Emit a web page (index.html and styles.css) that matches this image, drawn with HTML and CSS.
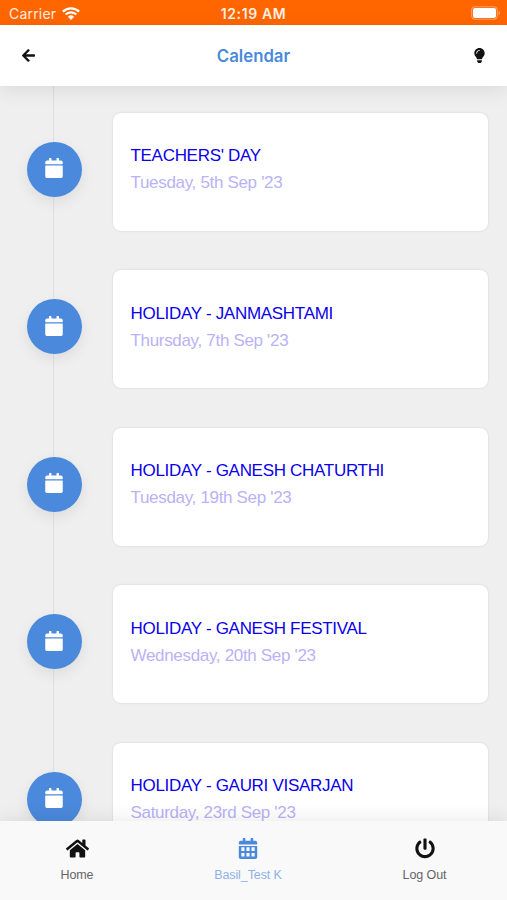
FILE: index.html
```html
<!DOCTYPE html>
<html lang="en">
<head>
    <meta charset="UTF-8">
    <meta name="viewport" content="width=device-width, initial-scale=1.0">
    <title>Calendar</title>
    <link rel="stylesheet" href="styles.css">
</head>
<body>
    <svg class="sprite">
        <symbol id="icon-calendar" viewBox="0 0 448 512">
            <path d="M12 192h424c6.600 0 12 5.400 12 12v260c0 26.500-21.500 48-48 48H48c-26.500 0-48-21.500-48-48V204c0-6.600 5.400-12 12-12zm436-44v-36c0-26.500-21.500-48-48-48h-48V12c0-6.600-5.400-12-12-12h-40c-6.600 0-12 5.400-12 12v52H160V12c0-6.600-5.400-12-12-12h-40c-6.600 0-12 5.400-12 12v52H48C21.500 64 0 85.500 0 112v36c0 6.600 5.400 12 12 12h424c6.600 0 12-5.400 12-12z"/>
        </symbol>
    </svg>

    <div class="app">
        <div class="status-bar">
            <div class="status-left">
                <span class="carrier">Carrier</span>
                <svg class="wifi" viewBox="0 0 18 13">
                    <path d="M0.900 4.600a11.700 11.700 0 0 1 16.200 0M3.600 7.500a7.700 7.700 0 0 1 10.800 0" fill="none" stroke="currentColor" stroke-width="2.300"/>
                    <path d="M5.900 9.700a4.600 4.600 0 0 1 6.200 0L9 13z" fill="currentColor"/>
                </svg>
            </div>
            <span class="time">12:19 AM</span>
            <svg class="battery" viewBox="0 0 30 14">
                <rect x="0.700" y="0.700" width="25.600" height="12.600" rx="3.600" fill="none" stroke="#ffa366" stroke-width="1.100"/>
                <rect x="2" y="2" width="23" height="10" rx="2" fill="#fff"/>
                <path d="M27.600 4.800c1.900.6 1.900 3.800 0 4.400z" fill="#ffa366"/>
            </svg>
        </div>

        <header class="header">
            <svg class="back" viewBox="0 0 448 512">
                <path d="M257.500 445.100l-22.200 22.200c-9.400 9.400-24.600 9.400-33.900 0L7 273c-9.400-9.400-9.400-24.600 0-33.900L201.400 44.700c9.400-9.400 24.600-9.400 33.900 0l22.200 22.200c9.500 9.500 9.300 25-.4 34.300L136.600 216H424c13.300 0 24 10.700 24 24v32c0 13.300-10.700 24-24 24H136.600l120.500 114.800c9.800 9.300 10 24.800.4 34.300z"/>
            </svg>
            <h1>Calendar</h1>
            <svg class="bulb" viewBox="0 0 352 512">
                <path d="M96.060 454.350c.01 6.290 1.870 12.450 5.360 17.690l17.090 25.690a31.990 31.990 0 0 0 26.640 14.280h61.710a31.990 31.990 0 0 0 26.640-14.280l17.090-25.690a31.990 31.990 0 0 0 5.360-17.690l.04-38.350H96.010l.05 38.350zM0 176c0 44.370 16.450 84.850 43.560 115.780 16.520 18.850 42.360 58.230 52.210 91.450.04.26.07.52.11.780h160.240c.04-.26.07-.51.11-.780 9.850-33.220 35.690-72.600 52.210-91.450C335.550 260.850 352 220.370 352 176 352 78.610 272.910-.3 175.450 0 73.440.31 0 82.970 0 176zm176-80c-44.110 0-80 35.890-80 80 0 8.840-7.160 16-16 16s-16-7.160-16-16c0-61.760 50.240-112 112-112 8.840 0 16 7.160 16 16s-7.160 16-16 16z"/>
            </svg>
        </header>

        <main class="timeline">
            <div class="event">
                <div class="event-icon"><svg><use href="#icon-calendar"/></svg></div>
                <div class="event-card">
                    <h2>TEACHERS' DAY</h2>
                    <p>Tuesday, 5th Sep '23</p>
                </div>
            </div>
            <div class="event">
                <div class="event-icon"><svg><use href="#icon-calendar"/></svg></div>
                <div class="event-card">
                    <h2>HOLIDAY - JANMASHTAMI</h2>
                    <p>Thursday, 7th Sep '23</p>
                </div>
            </div>
            <div class="event">
                <div class="event-icon"><svg><use href="#icon-calendar"/></svg></div>
                <div class="event-card">
                    <h2>HOLIDAY - GANESH CHATURTHI</h2>
                    <p>Tuesday, 19th Sep '23</p>
                </div>
            </div>
            <div class="event">
                <div class="event-icon"><svg><use href="#icon-calendar"/></svg></div>
                <div class="event-card">
                    <h2>HOLIDAY - GANESH FESTIVAL</h2>
                    <p>Wednesday, 20th Sep '23</p>
                </div>
            </div>
            <div class="event">
                <div class="event-icon"><svg><use href="#icon-calendar"/></svg></div>
                <div class="event-card">
                    <h2>HOLIDAY - GAURI VISARJAN</h2>
                    <p>Saturday, 23rd Sep '23</p>
                </div>
            </div>
        </main>

        <nav class="tabs">
            <a class="tab">
                <svg class="home" viewBox="0 0 576 512">
                    <path d="M280.370 148.260L96 300.110V464a16 16 0 0 0 16 16l112.060-.29a16 16 0 0 0 15.920-16V368a16 16 0 0 1 16-16h64a16 16 0 0 1 16 16v95.640a16 16 0 0 0 16 16.050L464 480a16 16 0 0 0 16-16V300L295.670 148.260a12.190 12.190 0 0 0-15.300 0zM571.600 251.470L488 182.560V44.050a12 12 0 0 0-12-12h-56a12 12 0 0 0-12 12v72.610L318.470 43a48 48 0 0 0-61 0L4.340 251.470a12 12 0 0 0-1.600 16.900l25.500 31A12 12 0 0 0 45.150 301l235.220-193.740a12.190 12.190 0 0 1 15.300 0L530.900 301a12 12 0 0 0 16.900-1.600l25.500-31a12 12 0 0 0-1.700-16.930z"/>
                </svg>
                <span>Home</span>
            </a>
            <a class="tab active">
                <svg viewBox="0 0 448 512">
                    <path fill-rule="evenodd" d="M0 192h448v272c0 26.500-21.500 48-48 48H48c-26.500 0-48-21.500-48-48zM62 228v88h76v-88zM186 228v88h76v-88zM310 228v88h76v-88zM62 364v88h76v-88zM186 364v88h76v-88zM310 364v88h76v-88zM448 148v-36c0-26.500-21.500-48-48-48h-48V12c0-6.600-5.400-12-12-12h-40c-6.600 0-12 5.400-12 12v52H160V12c0-6.600-5.400-12-12-12h-40c-6.600 0-12 5.400-12 12v52H48C21.500 64 0 85.500 0 112v36c0 6.600 5.400 12 12 12h424c6.600 0 12-5.400 12-12z"/>
                </svg>
                <span>Basil_Test K</span>
            </a>
            <a class="tab">
                <svg viewBox="0 0 512 512">
                    <path d="M400 54.100c63 45 104 118.600 104 201.900 0 136.800-110.800 247.700-247.500 248C120 504.300 8.200 393 8 256.400 7.900 173.100 48.900 99.300 111.800 54.200c11.700-8.300 28-4.800 35 7.700L162.600 90c5.900 10.500 3.100 23.800-6.600 31-41.500 30.800-68 79.600-68 134.900-.1 92.300 74.500 168.100 168 168.100 91.600 0 168.600-74.200 168-169.100-.3-51.800-24.700-101.800-68.100-134-9.700-7.200-12.400-20.500-6.500-30.900l15.800-28.100c7-12.400 23.200-16.100 34.800-7.800zM296 264V24c0-13.300-10.700-24-24-24h-32c-13.300 0-24 10.700-24 24v240c0 13.300 10.700 24 24 24h32c13.300 0 24-10.700 24-24z"/>
                </svg>
                <span>Log Out</span>
            </a>
        </nav>
    </div>
</body>
</html>
```

FILE: styles.css
```css
* {
    box-sizing: border-box;
}

body, html {
    margin: 0;
    padding: 0;
    height: 100%;
    overflow: hidden;
    font-family: "Liberation Sans", Arial, sans-serif;
    background-color: #efefef;
}

.sprite {
    display: none;
}

.app {
    height: 100vh;
    display: flex;
    flex-direction: column;
}

.status-bar {
    height: 25px;
    flex-shrink: 0;
    display: grid;
    grid-template-columns: 1fr auto 1fr;
    align-items: center;
    padding: 2px 6px 0;
    background-color: #ff6600;
    color: #ffeee2;
    font-family: Inter, sans-serif;
}

.status-left {
    display: flex;
    align-items: center;
    gap: 6px;
    padding-left: 3px;
}

.carrier {
    font-size: 14px;
    letter-spacing: 0.2px;
}

.wifi {
    width: 18px;
    height: 13px;
    color: #fff;
    margin-top: -1px;
}

.time {
    font-size: 14px;
    font-weight: 600;
    letter-spacing: 0.600px;
}

.battery {
    width: 30px;
    height: 14px;
    justify-self: end;
    margin-top: -1px;
}

.header {
    height: 61px;
    flex-shrink: 0;
    display: grid;
    grid-template-columns: 1fr auto 1fr;
    align-items: center;
    padding: 0 22px;
    background-color: #fff;
    box-shadow: 0 4px 20px rgba(0, 0, 0, 0.09);
    z-index: 2;
}

.header h1 {
    margin: 0;
    font-family: Inter, sans-serif;
    font-size: 16.800px;
    font-weight: 600;
    color: #4a89dc;
}

.back {
    width: 13px;
    height: 15px;
    fill: #111;
    margin-top: -1px;
}

.bulb {
    width: 11px;
    height: 15px;
    fill: #111;
    justify-self: end;
    margin-top: -1px;
}

.timeline {
    flex: 1;
    min-height: 0;
    overflow: hidden;
    display: flex;
    flex-direction: column;
    gap: 39.500px;
    padding: 26.500px 19.500px 0 26.500px;
    background: linear-gradient(#dfdfdf, #dfdfdf) 53px 0 / 1px 100% no-repeat #efefef;
}

.event {
    flex-shrink: 0;
    display: flex;
    gap: 31px;
}

.event-icon {
    width: 55px;
    height: 55px;
    margin-top: 29px;
    border-radius: 50%;
    display: flex;
    align-items: center;
    justify-content: center;
    background-color: #4a89dc;
    box-shadow: 0 5px 14px rgba(0, 0, 0, 0.08);
}

.event-icon svg {
    width: 18px;
    height: 20px;
    fill: #fff;
    margin-top: -2px;
}

.event-card {
    flex: 1;
    height: 118px;
    padding: 29.500px 18px;
    border-radius: 8px;
    background-color: #fff;
    box-shadow: 0 0 2px rgba(0, 0, 0, 0.15);
    white-space: nowrap;
}

.event-card h2 {
    margin: 0;
    font-size: 17px;
    line-height: 27px;
    font-weight: normal;
    letter-spacing: -0.300px;
    color: #0a00ea;
}

.event-card p {
    margin: 0;
    font-size: 17px;
    line-height: 27px;
    letter-spacing: -0.320px;
    color: #b9b2f7;
}

.tabs {
    height: 79px;
    flex-shrink: 0;
    display: flex;
    justify-content: space-between;
    padding: 17px 0 0;
    background-color: #f9f9f9;
    box-shadow: 0 -3px 16px rgba(0, 0, 0, 0.08);
    z-index: 2;
}

.tab {
    width: 154px;
    display: flex;
    flex-direction: column;
    align-items: center;
    gap: 8px;
    font-size: 12.500px;
    line-height: 16px;
    letter-spacing: -0.100px;
    color: #666;
}

.tab:last-child {
    width: 165px;
}

.tab svg {
    width: 20px;
    height: 21px;
    fill: #111;
}

.tab .home {
    width: 23px;
}

.tab.active {
    color: #8fb3e6;
}

.tab.active svg {
    fill: #4a89dc;
}
```
